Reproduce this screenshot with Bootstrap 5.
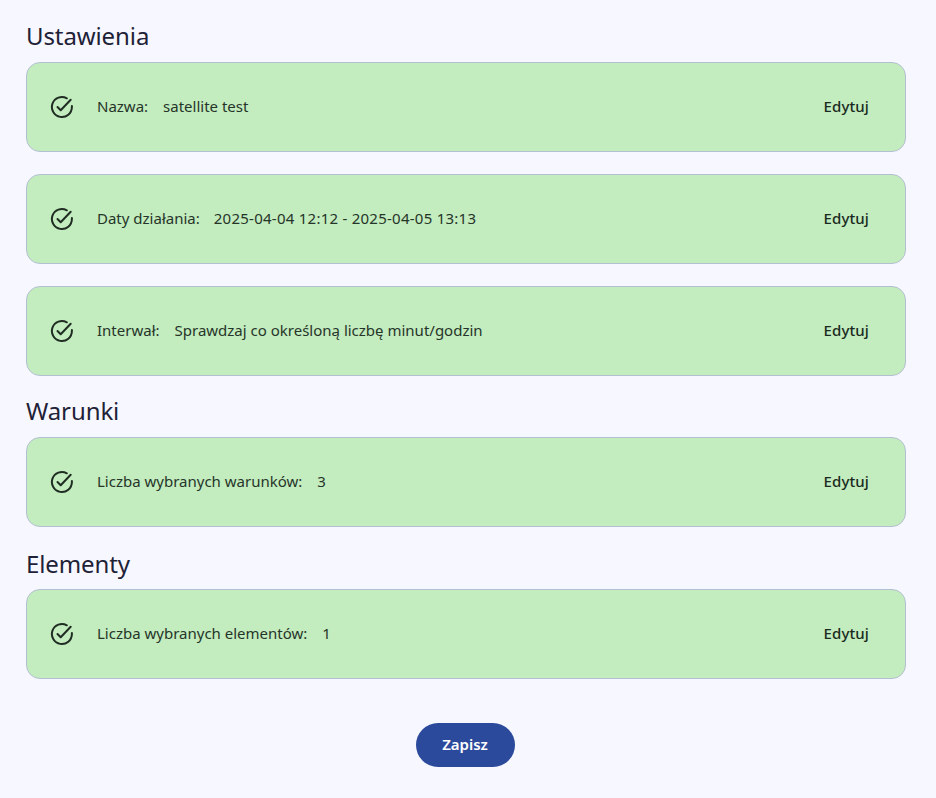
<!DOCTYPE html>
<html lang="pl">
<head>
<meta charset="utf-8">
<title>Ustawienia</title>
<link href="https://cdn.jsdelivr.net/npm/bootstrap@5.3.0/dist/css/bootstrap.min.css" rel="stylesheet">
<style>
html,body{height:100%}
body{background:#f7f8ff;color:#1c2033;font-family:"Noto Sans","Liberation Sans",sans-serif;overflow:hidden}
.page-wrap{padding:21px 30px 0 26px}
.sec-title{font-size:24px;line-height:30px;font-weight:400;margin:0 0 11px;color:#1f2237;letter-spacing:-.1px}
.step-list{display:flex;flex-direction:column;gap:22px;margin-bottom:21px}
.first-list{margin-bottom:20px}
.mid-list{margin-bottom:22px}
.last-title{margin-bottom:10px}
.step-card{height:90px;background:#c3ecbf;border:1px solid #b5bfd2;border-radius:14px;padding:0 36px 0 23px;color:#263529;font-size:15px;line-height:20px}
.step-card > span,.step-edit{padding-bottom:2px}
.step-icon{width:24px;height:24px;flex:none;margin-right:23px}
.step-label{margin-right:15px}
.date-val{letter-spacing:.25px;margin-left:-1px}
.step-edit{font-size:15px;font-weight:500;color:#1a2a1e;text-decoration:none;letter-spacing:.1px}
.save-btn{width:99px;height:44px;border-radius:22px;background:#2b4a9b;border:0;color:#fff;font-size:15px;font-weight:600;padding:0 0 2px}
.save-row{margin-top:44px;padding-right:2px}
</style>
</head>
<body>
<div class="page-wrap">
<h2 class="sec-title">Ustawienia</h2>
<div class="step-list first-list">
  <div class="step-card d-flex align-items-center">
    <svg class="step-icon" viewBox="0 0 24 24" fill="none" stroke="#1f2d22" stroke-width="2" stroke-linecap="round" stroke-linejoin="round"><path d="M21.9 11v1a10 10 0 1 1-5.1-8.7"/><path d="M7.5 12l3.2 3.3L20.7 4.8"/></svg>
    <span class="step-label">Nazwa:</span><span>satellite test</span>
    <a class="step-edit ms-auto" href="#">Edytuj</a>
  </div>
  <div class="step-card d-flex align-items-center">
    <svg class="step-icon" viewBox="0 0 24 24" fill="none" stroke="#1f2d22" stroke-width="2" stroke-linecap="round" stroke-linejoin="round"><path d="M21.9 11v1a10 10 0 1 1-5.1-8.7"/><path d="M7.5 12l3.2 3.3L20.7 4.8"/></svg>
    <span class="step-label">Daty działania:</span><span class="date-val">2025-04-04 12:12 - 2025-04-05 13:13</span>
    <a class="step-edit ms-auto" href="#">Edytuj</a>
  </div>
  <div class="step-card d-flex align-items-center">
    <svg class="step-icon" viewBox="0 0 24 24" fill="none" stroke="#1f2d22" stroke-width="2" stroke-linecap="round" stroke-linejoin="round"><path d="M21.9 11v1a10 10 0 1 1-5.1-8.7"/><path d="M7.5 12l3.2 3.3L20.7 4.8"/></svg>
    <span class="step-label">Interwał:</span><span>Sprawdzaj co określoną liczbę minut/godzin</span>
    <a class="step-edit ms-auto" href="#">Edytuj</a>
  </div>
</div>
<h2 class="sec-title">Warunki</h2>
<div class="step-list mid-list">
  <div class="step-card d-flex align-items-center">
    <svg class="step-icon" viewBox="0 0 24 24" fill="none" stroke="#1f2d22" stroke-width="2" stroke-linecap="round" stroke-linejoin="round"><path d="M21.9 11v1a10 10 0 1 1-5.1-8.7"/><path d="M7.5 12l3.2 3.3L20.7 4.8"/></svg>
    <span class="step-label">Liczba wybranych warunków:</span><span>3</span>
    <a class="step-edit ms-auto" href="#">Edytuj</a>
  </div>
</div>
<h2 class="sec-title last-title">Elementy</h2>
<div class="step-list mb-0">
  <div class="step-card d-flex align-items-center">
    <svg class="step-icon" viewBox="0 0 24 24" fill="none" stroke="#1f2d22" stroke-width="2" stroke-linecap="round" stroke-linejoin="round"><path d="M21.9 11v1a10 10 0 1 1-5.1-8.7"/><path d="M7.5 12l3.2 3.3L20.7 4.8"/></svg>
    <span class="step-label">Liczba wybranych elementów:</span><span>1</span>
    <a class="step-edit ms-auto" href="#">Edytuj</a>
  </div>
</div>
<div class="save-row d-flex justify-content-center">
  <button type="button" class="btn save-btn">Zapisz</button>
</div>
</div>
<script src="https://cdn.jsdelivr.net/npm/bootstrap@5.3.0/dist/js/bootstrap.bundle.min.js"></script>
</body>
</html>
